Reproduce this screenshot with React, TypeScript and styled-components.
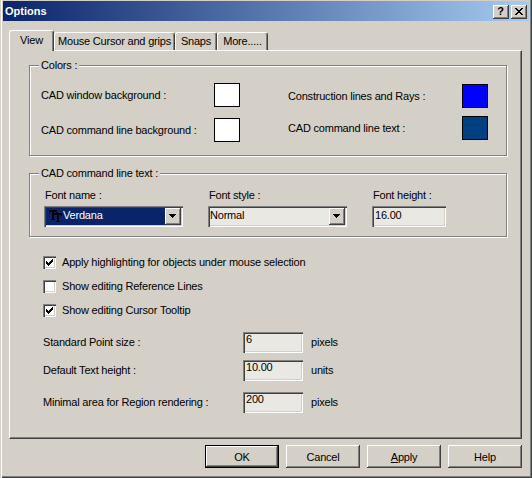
import styled, { createGlobalStyle } from "styled-components"

const GlobalStyle = createGlobalStyle`
  html, body {
    margin: 0;
    padding: 0;
    background: #d4d0c8;
  }
  body {
    font-family: "Liberation Sans", Arial, sans-serif;
    font-size: 11px;
    letter-spacing: -0.2px;
    color: #000;
  }
  * {
    box-sizing: border-box;
  }
`

const raised = `
  box-shadow: inset -1px -1px 0 #404040, inset 1px 1px 0 #fff,
    inset -2px -2px 0 #808080, inset 2px 2px 0 #d4d0c8;
`

const sunken = `
  box-shadow: inset 1px 1px 0 #808080, inset 2px 2px 0 #404040,
    inset -1px -1px 0 #fff, inset -2px -2px 0 #d4d0c8;
`

const Window = styled.div`
  width: 532px;
  height: 478px;
  background: #d4d0c8;
  padding: 1px 3px 3px 3px;
  display: flex;
  flex-direction: column;
  box-shadow: inset 1px 0 0 #d4d0c8, inset 2px 0 0 #fff,
    inset -1px -1px 0 #404040, inset -2px -2px 0 #808080;
`

const TitleBar = styled.div`
  height: 20px;
  display: flex;
  align-items: center;
  padding-left: 2px;
  background: linear-gradient(to right, #0a246a, #a6caf0);
  color: #fff;
  font-weight: bold;
  letter-spacing: 0;
`

const TitleText = styled.span`
  flex: 1;
  line-height: 13px;
`

const CaptionButtons = styled.div`
  display: flex;
  gap: 2px;
  align-self: flex-end;
  margin: 0 2px 2px 0;
`

const CaptionButton = styled.div`
  width: 16px;
  height: 14px;
  background: #d4d0c8;
  ${raised}
  display: flex;
  align-items: center;
  justify-content: center;
  color: #000;
  font-weight: bold;
  font-size: 11px;
  line-height: 11px;
  padding: 0 1px 1px 0;
`

const Body = styled.div`
  flex: 1;
  display: flex;
  flex-direction: column;
  padding: 9px 7px 0 6px;
`

const Tabs = styled.div`
  display: flex;
  align-items: flex-end;
  height: 20px;
`

const Tab = styled.div<{ $active?: boolean; $w: number }>`
  width: ${({ $w }) => $w}px;
  height: ${({ $active }) => ($active ? 21 : 18)}px;
  margin-bottom: ${({ $active }) => ($active ? -1 : 0)}px;
  position: relative;
  z-index: ${({ $active }) => ($active ? 1 : 0)};
  background: #d4d0c8;
  border-top: 1px solid #fff;
  border-left: 1px solid #fff;
  border-right: 1px solid #404040;
  box-shadow: inset -1px 0 0 #808080;
  border-radius: 3px 3px 0 0;
  display: flex;
  justify-content: center;
  align-items: ${({ $active }) => ($active ? "flex-start" : "center")};
  padding-top: ${({ $active }) => ($active ? 3 : 0)}px;
  line-height: 13px;
`

const Panel = styled.div`
  height: 389px;
  background: #d4d0c8;
  border-top: 1px solid #fff;
  border-left: 1px solid #fff;
  border-right: 1px solid #404040;
  border-bottom: 1px solid #404040;
  box-shadow: inset -1px -1px 0 #808080;
  padding: 14px 14px 0 19px;
`

const GroupBox = styled.div<{ $h: number; $mt?: number }>`
  position: relative;
  height: ${({ $h }) => $h}px;
  margin-top: ${({ $mt }) => $mt ?? 0}px;
  border: 1px solid #808080;
  box-shadow: inset 1px 1px 0 #fff, 1px 1px 0 #fff;
`

const GroupCaption = styled.span`
  position: absolute;
  top: -7px;
  left: 9px;
  padding: 0 2px;
  background: #d4d0c8;
  line-height: 13px;
`

const ColorGrid = styled.div`
  display: flex;
  gap: 48px;
  padding: 17px 0 0 11px;
`

const ColorColumn = styled.div<{ $w: number; $gap: number; $top: number }>`
  width: ${({ $w }) => $w}px;
  display: flex;
  flex-direction: column;
  gap: ${({ $gap }) => $gap}px;
  margin-top: ${({ $top }) => $top}px;
`

const ColorRow = styled.div`
  height: 24px;
  display: flex;
  align-items: center;
  justify-content: space-between;
`

const Swatch = styled.div<{ $color: string }>`
  width: 26px;
  height: 24px;
  border: 1px solid #000;
  background: ${({ $color }) => $color};
`

const FontRow = styled.div`
  display: flex;
  gap: 25px;
  padding: 15px 0 0 14px;
`

const FontCol = styled.div<{ $w: number }>`
  width: ${({ $w }) => $w}px;
  display: flex;
  flex-direction: column;
`

const FieldLabel = styled.span`
  line-height: 13px;
  padding-left: 1px;
  margin-bottom: 4px;
`

const Combo = styled.div<{ $bg: string }>`
  height: 21px;
  display: flex;
  padding: 2px;
  background: ${({ $bg }) => $bg};
  ${sunken}
`

const ComboValue = styled.div<{ $selected?: boolean }>`
  flex: 1;
  display: flex;
  align-items: flex-start;
  gap: 1px;
  padding: 1px 0 0 ${({ $selected }) => ($selected ? 3 : 0)}px;
  line-height: 13px;
  background: ${({ $selected }) => ($selected ? "#0a246a" : "transparent")};
  color: ${({ $selected }) => ($selected ? "#fff" : "#000")};
  svg {
    margin-top: 1px;
  }
`

const DropButton = styled.div`
  width: 16px;
  height: 17px;
  background: #d4d0c8;
  ${raised}
  display: flex;
  align-items: center;
  justify-content: center;
  padding: 0 1px 1px 0;
`

const TextBox = styled.div<{ $w: number; $lh: number }>`
  width: ${({ $w }) => $w}px;
  height: 21px;
  background: #eae8e3;
  ${sunken}
  padding: 2px 2px 0 3px;
  line-height: ${({ $lh }) => $lh}px;
  overflow: hidden;
`

const CheckList = styled.div`
  display: flex;
  flex-direction: column;
  gap: 11px;
  margin: 19px 0 0 14px;
`

const CheckRow = styled.label`
  display: flex;
  align-items: center;
  gap: 6px;
  height: 13px;
  line-height: 13px;
`

const CheckBox = styled.span`
  width: 13px;
  height: 13px;
  background: #fff;
  ${sunken}
  display: flex;
  align-items: center;
  justify-content: center;
`

const FieldRow = styled.div<{ $mt: number }>`
  display: flex;
  align-items: center;
  margin: ${({ $mt }) => $mt}px 0 0 14px;
`

const RowLabel = styled.span`
  width: 200px;
  line-height: 13px;
`

const Unit = styled.span`
  margin-left: 8px;
  line-height: 13px;
`

const ButtonRow = styled.div`
  display: flex;
  justify-content: flex-end;
  gap: 7px;
  margin-top: 6px;
`

const PushButton = styled.button<{ $default?: boolean }>`
  width: 74px;
  height: 23px;
  padding: 0;
  background: #d4d0c8;
  font: inherit;
  letter-spacing: inherit;
  color: #000;
  border: ${({ $default }) => ($default ? "1px solid #000" : "none")};
  ${raised}
`

const Arrow = () => (
  <svg width="7" height="4" viewBox="0 0 7 4" shapeRendering="crispEdges">
    <path d="M0 0h7v1h-7z M1 1h5v1h-5z M2 2h3v1h-3z M3 3h1v1h-1z" fill="#000" />
  </svg>
)

const Check = () => (
  <svg width="7" height="7" viewBox="0 0 7 7" shapeRendering="crispEdges">
    <path
      d="M0 2h1v3h-1z M1 3h1v3h-1z M2 4h1v3h-1z M3 3h1v3h-1z M4 2h1v3h-1z M5 1h1v3h-1z M6 0h1v3h-1z"
      fill="#000"
    />
  </svg>
)

const TrueType = () => (
  <svg width="13" height="12" viewBox="0 0 13 12" shapeRendering="crispEdges">
    <g fill="#000">
      <path d="M0 0h8v2h-8z M0 2h1v1h-1z M7 2h1v1h-1z M3 2h2v7h-2z M2 9h4v1h-4z" />
      <path d="M5 3h8v2h-8z M12 5h1v1h-1z M8 5h2v6h-2z M7 11h4v1h-4z" />
    </g>
  </svg>
)

const CloseGlyph = () => (
  <svg width="8" height="7" viewBox="0 0 8 7" shapeRendering="crispEdges">
    <path
      d="M0 0h2v1h-2z M6 0h2v1h-2z M1 1h2v1h-2z M5 1h2v1h-2z M2 2h4v1h-4z M3 3h2v1h-2z M2 4h4v1h-4z M1 5h2v1h-2z M5 5h2v1h-2z M0 6h2v1h-2z M6 6h2v1h-2z"
      fill="#000"
    />
  </svg>
)

export default function App() {
  return (
    <>
      <GlobalStyle />
      <Window>
        <TitleBar>
          <TitleText>Options</TitleText>
          <CaptionButtons>
            <CaptionButton>?</CaptionButton>
            <CaptionButton>
              <CloseGlyph />
            </CaptionButton>
          </CaptionButtons>
        </TitleBar>

        <Body>
          <Tabs>
            <Tab $active $w={45}>View</Tab>
            <Tab $w={121}>Mouse Cursor and grips</Tab>
            <Tab $w={42}>Snaps</Tab>
            <Tab $w={51}>More.....</Tab>
          </Tabs>

          <Panel>
            <GroupBox $h={91}>
              <GroupCaption>Colors :</GroupCaption>
              <ColorGrid>
                <ColorColumn $w={199} $gap={11} $top={0}>
                  <ColorRow>
                    CAD window background :
                    <Swatch $color="#fff" />
                  </ColorRow>
                  <ColorRow>
                    CAD command line background :
                    <Swatch $color="#fff" />
                  </ColorRow>
                </ColorColumn>
                <ColorColumn $w={200} $gap={8} $top={1}>
                  <ColorRow>
                    Construction lines and Rays :
                    <Swatch $color="#0000ff" />
                  </ColorRow>
                  <ColorRow>
                    CAD command line text :
                    <Swatch $color="#004080" />
                  </ColorRow>
                </ColorColumn>
              </ColorGrid>
            </GroupBox>

            <GroupBox $h={64} $mt={17}>
              <GroupCaption>CAD command line text :</GroupCaption>
              <FontRow>
                <FontCol $w={139}>
                  <FieldLabel>Font name :</FieldLabel>
                  <Combo $bg="#fff">
                    <ComboValue $selected>
                      <TrueType />
                      Verdana
                    </ComboValue>
                    <DropButton>
                      <Arrow />
                    </DropButton>
                  </Combo>
                </FontCol>
                <FontCol $w={139}>
                  <FieldLabel>Font style :</FieldLabel>
                  <Combo $bg="#eae8e3">
                    <ComboValue>Normal</ComboValue>
                    <DropButton>
                      <Arrow />
                    </DropButton>
                  </Combo>
                </FontCol>
                <FontCol $w={75}>
                  <FieldLabel>Font height :</FieldLabel>
                  <TextBox $w={74} $lh={14}>16.00</TextBox>
                </FontCol>
              </FontRow>
            </GroupBox>

            <CheckList>
              <CheckRow>
                <CheckBox>
                  <Check />
                </CheckBox>
                Apply highlighting for objects under mouse selection
              </CheckRow>
              <CheckRow>
                <CheckBox />
                Show editing Reference Lines
              </CheckRow>
              <CheckRow>
                <CheckBox>
                  <Check />
                </CheckBox>
                Show editing Cursor Tooltip
              </CheckRow>
            </CheckList>

            <FieldRow $mt={15}>
              <RowLabel>Standard Point size :</RowLabel>
              <TextBox $w={60} $lh={10}>6</TextBox>
              <Unit>pixels</Unit>
            </FieldRow>
            <FieldRow $mt={7}>
              <RowLabel>Default Text height :</RowLabel>
              <TextBox $w={60} $lh={10}>10.00</TextBox>
              <Unit>units</Unit>
            </FieldRow>
            <FieldRow $mt={11}>
              <RowLabel>Minimal area for Region rendering :</RowLabel>
              <TextBox $w={60} $lh={10}>200</TextBox>
              <Unit>pixels</Unit>
            </FieldRow>
          </Panel>

          <ButtonRow>
            <PushButton $default>OK</PushButton>
            <PushButton>Cancel</PushButton>
            <PushButton>
              <u>A</u>pply
            </PushButton>
            <PushButton>Help</PushButton>
          </ButtonRow>
        </Body>
      </Window>
    </>
  )
}
